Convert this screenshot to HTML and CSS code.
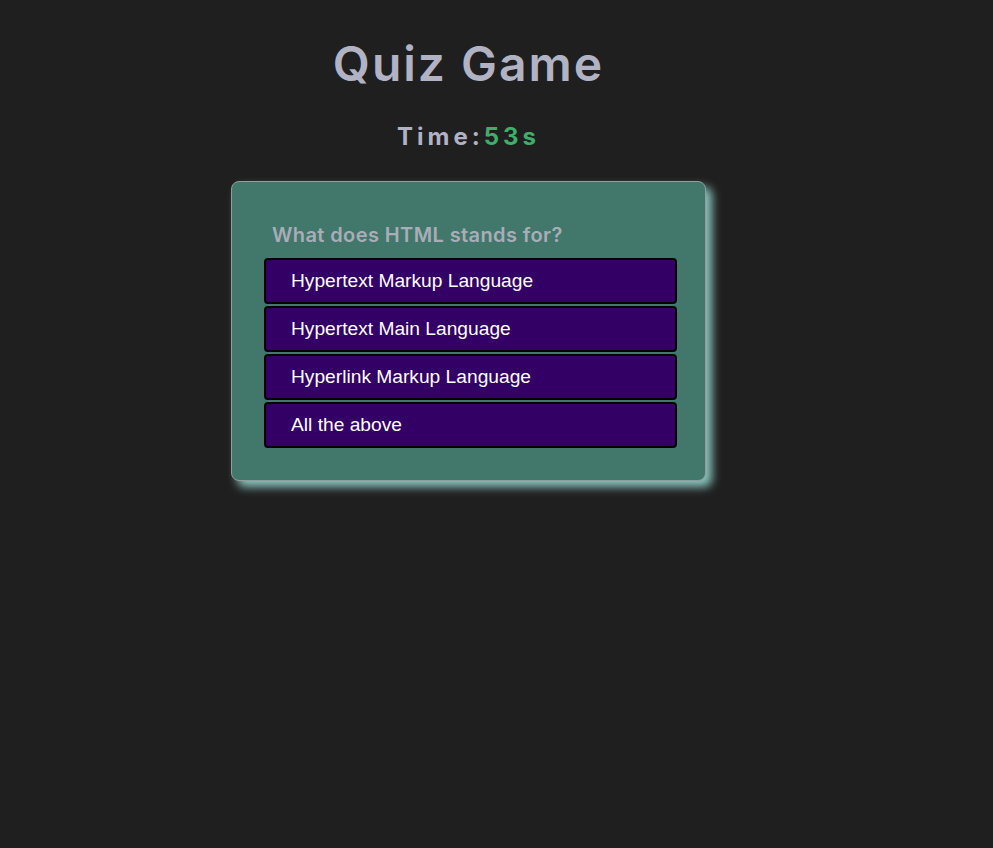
FILE: index.html
```html
<!DOCTYPE html>
<html lang="en">
<head>
<meta charset="UTF-8">
<title>Quiz Game</title>
<link rel="stylesheet" href="styles.css">
</head>
<body>
<main class="page">
  <h1 class="title">Quiz Game</h1>
  <div class="timer">Time:<span class="timer-value">53s</span></div>
  <section class="card">
    <h2 class="question">What does HTML stands for?</h2>
    <div class="options">
      <button class="option">Hypertext Markup Language</button>
      <button class="option">Hypertext Main Language</button>
      <button class="option">Hyperlink Markup Language</button>
      <button class="option">All the above</button>
    </div>
  </section>
</main>
</body>
</html>
```
FILE: styles.css
```css
* { box-sizing: border-box; }
html, body { margin: 0; padding: 0; }
body {
  background: #1f1f1f;
  min-height: 848px;
  font-family: "Inter", "Noto Sans", sans-serif;
}
.page {
  width: 937px;
  display: flex;
  flex-direction: column;
  align-items: center;
  padding-top: 34px;
}
.title {
  margin: 0;
  font-size: 48px;
  line-height: 60px;
  font-weight: 600;
  color: #b1b3c4;
  letter-spacing: 2px;
}
.timer {
  margin-top: 28px;
  font-size: 24px;
  line-height: 30px;
  font-weight: 700;
  letter-spacing: 4px;
  color: #b1b3c4;
}
.timer-value { color: #3fae6a; }
.card {
  margin-top: 29px;
  width: 475px;
  background: #42776b;
  border: 1px solid #8f9f9b;
  border-radius: 8px;
  box-shadow: 6px 6px 10px #8cc4bf;
  padding: 41px 28px 32px 32px;
}
.question {
  margin: 0 0 11px 8px;
  font-size: 20px;
  line-height: 24px;
  font-weight: 600;
  letter-spacing: 0.4px;
  color: #a9adb7;
}
.options {
  display: flex;
  flex-direction: column;
  gap: 2px;
}
.option {
  display: block;
  width: 413px;
  height: 46px;
  text-align: left;
  padding: 0 0 0 25px;
  background: #330066;
  color: #ffffff;
  border: 2px solid #000000;
  border-radius: 4px;
  font-family: "Liberation Sans", Arial, sans-serif;
  font-size: 19.2px;
}
```
